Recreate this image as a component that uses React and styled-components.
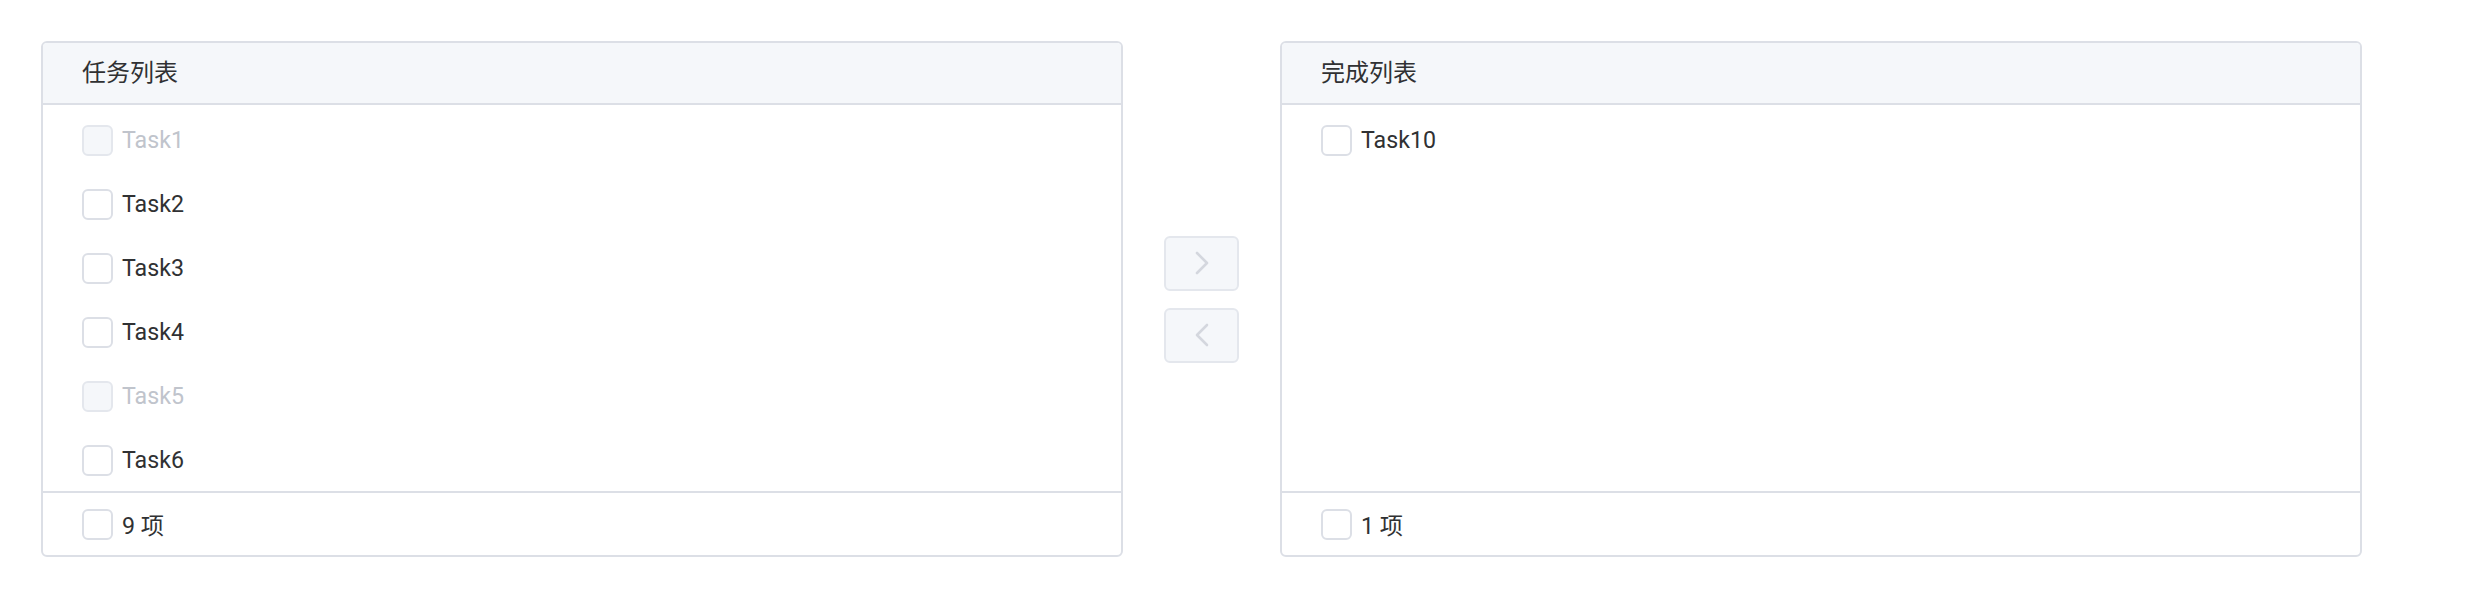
import React from "react";
import styled, { createGlobalStyle } from "styled-components";

const GlobalStyle = createGlobalStyle`
  body {
    margin: 0;
    background: #ffffff;
    font-family: Roboto, "Noto Sans CJK SC", sans-serif;
  }
`;

const Page = styled.div`
  display: flex;
  align-items: center;
  padding: 41px;
`;

const Panel = styled.div`
  box-sizing: border-box;
  width: 1082px;
  height: 516px;
  border: 2px solid #dcdfe6;
  border-radius: 6px;
  display: flex;
  flex-direction: column;
  overflow: hidden;
  background: #ffffff;
`;

const Header = styled.div`
  box-sizing: border-box;
  height: 62px;
  flex-shrink: 0;
  display: flex;
  align-items: center;
  padding: 0 0 5px 39px;
  background: #f5f7fa;
  border-bottom: 2px solid #dcdfe6;
  font-size: 24px;
  color: #303133;
`;

const Body = styled.div`
  flex: 1;
  overflow: hidden;
  padding-top: 3px;
`;

const Row = styled.label`
  height: 64px;
  display: flex;
  align-items: center;
  gap: 9px;
  padding-left: 39px;
  font-size: 23.2px;
  color: ${(p) => (p.$disabled ? "#c0c4cc" : "#303133")};
`;

const Box = styled.span`
  box-sizing: border-box;
  width: 31px;
  height: 31px;
  border: 2px solid ${(p) => (p.$disabled ? "#e4e7ed" : "#dcdfe6")};
  border-radius: 6px;
  background: ${(p) => (p.$disabled ? "#f5f7fa" : "#ffffff")};
  flex-shrink: 0;
`;

const Footer = styled.div`
  height: 62px;
  flex-shrink: 0;
  display: flex;
  align-items: center;
  gap: 9px;
  padding-left: 39px;
  border-top: 2px solid #dcdfe6;
  font-size: 23.2px;
  color: #303133;
`;

const Buttons = styled.div`
  display: flex;
  flex-direction: column;
  gap: 17px;
  margin: 0 41px;
`;

const MoveButton = styled.button`
  box-sizing: border-box;
  width: 75px;
  height: 55px;
  display: flex;
  align-items: center;
  justify-content: center;
  padding: 0;
  border: 2px solid #e4e7ed;
  border-radius: 6px;
  background: #f5f7fa;
  cursor: not-allowed;
`;

const Chevron = ({ left }) => (
  <svg width="16" height="24" viewBox="0 0 16 24" fill="none">
    <polyline
      points={left ? "13,2 3,12 13,22" : "3,2 13,12 3,22"}
      stroke="#d4d7de"
      strokeWidth="2.6"
      strokeLinecap="round"
      strokeLinejoin="round"
    />
  </svg>
);

const source = [
  { label: "Task1", disabled: true },
  { label: "Task2" },
  { label: "Task3" },
  { label: "Task4" },
  { label: "Task5", disabled: true },
  { label: "Task6" },
  { label: "Task7" },
  { label: "Task8" },
  { label: "Task9", disabled: true },
];

const target = [{ label: "Task10" }];

const TransferPanel = ({ title, items }) => (
  <Panel>
    <Header>{title}</Header>
    <Body>
      {items.map((it) => (
        <Row key={it.label} $disabled={it.disabled}>
          <Box $disabled={it.disabled} />
          {it.label}
        </Row>
      ))}
    </Body>
    <Footer>
      <Box />
      {items.length} 项
    </Footer>
  </Panel>
);

export default function App() {
  return (
    <>
      <GlobalStyle />
      <Page>
        <TransferPanel title="任务列表" items={source} />
        <Buttons>
          <MoveButton disabled>
            <Chevron />
          </MoveButton>
          <MoveButton disabled>
            <Chevron left />
          </MoveButton>
        </Buttons>
        <TransferPanel title="完成列表" items={target} />
      </Page>
    </>
  );
}
